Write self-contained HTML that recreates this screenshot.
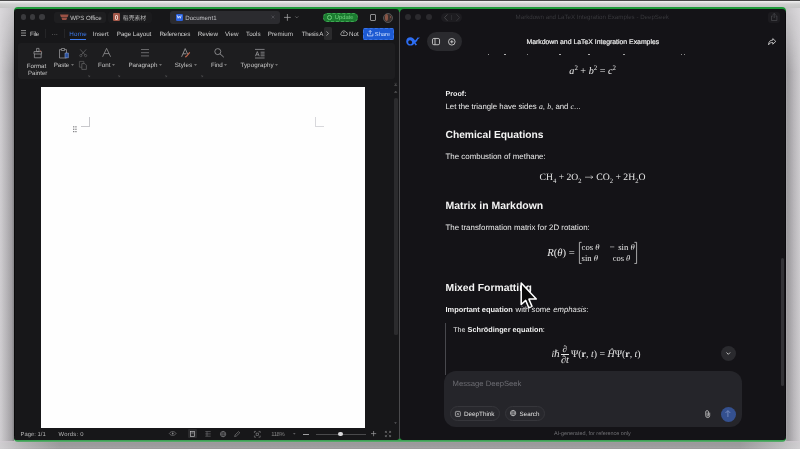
<!DOCTYPE html>
<html lang="en"><head><meta charset="utf-8"><title>WPS Office and DeepSeek</title>
<style>
html,body{margin:0;padding:0}
body{width:800px;height:449px;position:relative;overflow:hidden;background:#cfcfcf;font-family:"Liberation Sans","Noto Sans CJK SC",sans-serif}
.a{position:absolute;box-sizing:border-box}
.t{position:absolute;white-space:nowrap;letter-spacing:0;text-rendering:geometricPrecision;-webkit-font-smoothing:antialiased}
.t sup,.t sub{font-size:68%;line-height:0}
.t i.m{font-family:"Liberation Serif",serif}
svg{position:absolute;overflow:visible}
.bgL{left:0;top:0;width:14.2px;height:449px;background:linear-gradient(90deg,#d9d7da 0%,#d0ced1 50%,#c6c4c7 100%)}
.bgR{left:786px;top:0;width:14px;height:449px;background:linear-gradient(90deg,#c6c4c7 0%,#d0ced1 50%,#d9d7da 100%)}
.bgT{left:0;top:0;width:800px;height:8px;background:linear-gradient(180deg,#4a4a4a 0,#4a4a4a 1px,#f0f0f0 1.2px,#e4e4e4 2.2px,#cfcfcf 4px,#c6c6c6 8px)}
.bgB{left:0;top:441px;width:800px;height:8px;background:linear-gradient(180deg,#a898a6 0,#9a9a9b 2.2px,#9c9c9d 5px,#a4a4a5 7.2px,#8e8e8e 8px)}
.green{left:14px;top:7px;width:772px;height:435px;background:linear-gradient(180deg,#1f9a3a 0,#1f9a3a 432.6px,#3fa257 433.6px,#62ac72 435px);border-radius:4px}
.winL{left:14px;top:9px;width:385.3px;height:430.6px;background:#171719;border-radius:3px 3px 2px 2px}
.winR{left:400.2px;top:9px;width:385.8px;height:430.6px;background:#141317;border-radius:4px 4px 3px 3px}
.sep{left:399.3px;top:12px;width:0.9px;height:427px;background:#4a4a4c}
.tl{width:5.6px;height:5.6px;border-radius:50%;background:#3a3a3d}
.page{left:40.8px;top:86.8px;width:324.3px;height:341.6px;background:#fefefe}
.rib{left:17.8px;top:42.5px;width:376.8px;height:36.2px;background:#1d1d1f;border-radius:3px}
.pill{border-radius:99px}
.txt{position:absolute;left:0;top:0;width:800px;height:449px;will-change:transform}
.shL{left:0;top:0;width:14.2px;height:449px;background:linear-gradient(90deg,rgba(20,18,22,0.04) 0%,rgba(20,18,22,0.13) 45%,rgba(20,18,22,0.22) 85%,rgba(10,10,12,0.36) 100%);-webkit-mask-image:linear-gradient(180deg,transparent 12px,#000 72px);mask-image:linear-gradient(180deg,transparent 12px,#000 72px)}
.shR{left:786px;top:0;width:14px;height:449px;background:linear-gradient(270deg,rgba(20,18,22,0.05) 0%,rgba(20,18,22,0.13) 45%,rgba(20,18,22,0.24) 88%,rgba(20,18,22,0.16) 100%);-webkit-mask-image:linear-gradient(180deg,transparent 12px,#000 72px);mask-image:linear-gradient(180deg,transparent 12px,#000 72px)}
.bcL{left:0;top:441px;width:60px;height:8px;background:linear-gradient(90deg,rgba(225,223,226,0.75) 0,rgba(215,213,216,0.45) 22px,rgba(200,200,200,0) 60px)}
.bcR{left:740px;top:441px;width:60px;height:8px;background:linear-gradient(270deg,rgba(225,223,226,0.75) 0,rgba(215,213,216,0.5) 22px,rgba(200,200,200,0) 60px)}
.edgeL{left:14px;top:12px;width:0.9px;height:424px;background:#0b0b0c}
.edgeR{left:785.1px;top:13px;width:0.9px;height:423px;background:#0b0a0d}

</style></head><body>
<div class="a bgL"></div><div class="a bgR"></div><div class="a shL"></div><div class="a shR"></div><div class="a bgB"></div><div class="a bcL"></div><div class="a bcR"></div><div class="a bgT"></div>
<div class="a green"></div>
<div class="a winL"></div><div class="a winR"></div><div class="a sep"></div><div class="a edgeL"></div><div class="a edgeR"></div>

<!-- ===== left window: WPS ===== -->
<div class="a tl" style="left:20.9px;top:14.2px"></div>
<div class="a tl" style="left:29.9px;top:14.2px"></div>
<div class="a tl" style="left:39.2px;top:14.2px"></div>
<div class="a" style="left:54.3px;top:11.8px;width:52px;height:11.4px;background:#1e1e20;border-radius:3px"></div>
<div class="a" style="left:108px;top:11.8px;width:44px;height:11.4px;background:#1b1b1d;border-radius:3px"></div>
<div class="a" style="left:169.7px;top:10.8px;width:110.1px;height:13.2px;background:#2b2b2f;border-radius:3px"></div>
<!-- wps logo -->
<svg style="left:60px;top:13.8px" width="8.6" height="6.6" viewBox="0 0 8.6 6.6"><path d="M0 0.6h8.6l-0.9 2.3h-6.8zM1.3 3.5h6l-1 2.6h-4z" fill="#9c5245"/></svg>
<div class="a" style="left:113px;top:13.2px;width:7px;height:8px;background:#a5594a;border-radius:1.2px"></div>
<div class="a" style="left:115px;top:14.8px;width:2.6px;height:5px;border:0.8px solid #e8d0c8;border-radius:1px"></div>
<div class="a" style="left:176.2px;top:13.6px;width:6.7px;height:7.2px;background:#2c62dc;border-radius:1.2px"></div>
<svg style="left:177.4px;top:15.3px" width="4.4" height="3.8" viewBox="0 0 4.4 3.8"><path d="M0.2 0.3l0.9 3 1.1-2.2 1.1 2.2 0.9-3" fill="none" stroke="#dfe8ff" stroke-width="0.8"/></svg>
<svg style="left:270.9px;top:15.4px" width="4" height="4" viewBox="0 0 4 4"><path d="M0.6 0.6l2.8 2.8M3.4 0.6l-2.8 2.8" stroke="#55555a" stroke-width="0.7"/></svg>
<svg style="left:284.2px;top:13.9px" width="6.8" height="6.8" viewBox="0 0 6.8 6.8"><path d="M3.4 0v6.8M0 3.4h6.8" stroke="#b0b0b0" stroke-width="0.7"/></svg>
<svg style="left:294.6px;top:16px" width="3.6" height="2.4" viewBox="0 0 3.6 2.4"><path d="M0.3 0.4l1.5 1.5 1.5-1.5" fill="none" stroke="#8a8a8a" stroke-width="0.6"/></svg>
<div class="a pill" style="left:322.8px;top:13.2px;width:35px;height:8.7px;background:#1b7c30;border:0.6px dashed #3fa552"></div>
<div class="a" style="left:327.2px;top:15.2px;width:4.8px;height:4.8px;border-radius:50%;border:0.7px solid #6fcf7c"></div>
<div class="a" style="left:369.8px;top:14.4px;width:6.4px;height:6.3px;border:0.7px solid #8e8e90;border-radius:1px;border-top-width:1.5px"></div>
<div class="a" style="left:383.4px;top:12.8px;width:10px;height:10px;border-radius:50%;background:#3a302e;border:0.6px solid #555"></div>
<div class="a" style="left:385px;top:14.2px;width:3.4px;height:6.8px;border-radius:50%;background:#8a5646"></div>
<div class="a" style="left:390px;top:15.6px;width:1.4px;height:2.6px;border-radius:50%;background:#8a5646"></div>

<!-- menu row -->
<svg style="left:21.4px;top:30.4px" width="5" height="6" viewBox="0 0 5 6"><path d="M0 0.6h5M0 3h5M0 5.4h5" stroke="#c0c0c0" stroke-width="0.7"/></svg>
<div class="a" style="left:45.3px;top:29px;width:0.6px;height:9px;background:#252527"></div>
<div class="a" style="left:64.1px;top:29px;width:0.6px;height:9px;background:#252527"></div>
<div class="a" style="left:69.7px;top:38.6px;width:16.5px;height:0.9px;background:#3d7bf0"></div>
<div class="a" style="left:323.5px;top:26.8px;width:8.3px;height:12.8px;background:#2b2b2d;border-radius:1.5px"></div>
<svg style="left:326.4px;top:30.8px" width="3" height="5" viewBox="0 0 3 5"><path d="M0.5 0.4l2 2.1-2 2.1" fill="none" stroke="#c0c0c0" stroke-width="0.7"/></svg>
<svg style="left:340px;top:30.2px" width="7.6" height="6" viewBox="0 0 7.6 6"><path d="M2 5.5h3.8a1.6 1.6 0 0 0 .2-3.2a2.3 2.3 0 0 0-4.4.5a1.4 1.4 0 0 0 .4 2.7z" fill="none" stroke="#c8c8c8" stroke-width="0.7"/><path d="M3.8 4.2v-1.8M3 3.1l0.8-0.8 0.8 0.8" fill="none" stroke="#c8c8c8" stroke-width="0.5"/></svg>
<div class="a" style="left:362.6px;top:28px;width:31.2px;height:11.6px;background:#1d5ad2;border-radius:1.5px;border:0.6px dashed #3a74e6"></div>
<svg style="left:366.6px;top:30.4px" width="6.4" height="6.4" viewBox="0 0 6.4 6.4"><path d="M0.5 3.6v2.3h5.4v-2.3M3.2 4.2v-3.6M1.8 1.9l1.4-1.4 1.4 1.4" fill="none" stroke="#dfe8ff" stroke-width="0.7"/></svg>

<!-- ribbon -->
<div class="a rib"></div>
<!-- format painter -->
<svg style="left:32.6px;top:48.2px" width="9.6" height="10.4" viewBox="0 0 9.6 10.4"><path d="M3.6 0.4h2.4v3.2h-2.4zM1 3.6h7.6v2.4h-7.6zM1.4 6v3.8h6.8v-3.8" fill="none" stroke="#a4a4a6" stroke-width="0.7"/><circle cx="7.6" cy="3" r="0.6" fill="#c86a50"/></svg>
<!-- paste -->
<svg style="left:58.6px;top:48px" width="10" height="10.6" viewBox="0 0 10 10.6"><path d="M0.5 1.6h7v8.4h-7z" fill="none" stroke="#a4a4a6" stroke-width="0.7"/><path d="M2.4 0.5h3.2v2h-3.2z" fill="#19191b" stroke="#a4a4a6" stroke-width="0.7"/><path d="M6 5h3.4v4.8h-3.4z" fill="#27509f" stroke="#93a6cf" stroke-width="0.55"/></svg>
<svg style="left:71px;top:64.2px" width="3" height="2" viewBox="0 0 3 2"><path d="M0 0.3h3l-1.5 1.5z" fill="#8a8a8a"/></svg>
<!-- scissors -->
<svg style="left:78.6px;top:49.2px" width="8.4" height="8" viewBox="0 0 8.4 8"><path d="M1.2 0.4l5 5.6M7.2 0.4l-5 5.6" stroke="#6a6a6c" stroke-width="0.7"/><circle cx="1.8" cy="6.6" r="1.1" fill="none" stroke="#6a6a6c" stroke-width="0.6"/><circle cx="6.6" cy="6.6" r="1.1" fill="none" stroke="#6a6a6c" stroke-width="0.6"/></svg>
<!-- copy -->
<svg style="left:78.8px;top:61.4px" width="8" height="8.8" viewBox="0 0 8 8.8"><path d="M0.4 0.4h4.4v5.8h-4.4z" fill="none" stroke="#5e5e60" stroke-width="0.7"/><path d="M2.8 2.6h3l1.6 1.6v4.2h-4.6z" fill="#1f1f21" stroke="#6a6a6c" stroke-width="0.7"/></svg>
<!-- font A -->
<svg style="left:102.4px;top:48.4px" width="9.2" height="9" viewBox="0 0 9.2 9"><path d="M0.6 8.8l4-8.4 4 8.4M2.2 5.6h4.8" fill="none" stroke="#a4a4a6" stroke-width="0.68"/></svg>
<svg style="left:112px;top:64.2px" width="3" height="2" viewBox="0 0 3 2"><path d="M0 0.3h3l-1.5 1.5z" fill="#8a8a8a"/></svg>
<!-- paragraph -->
<svg style="left:141.4px;top:49.4px" width="8" height="7.4" viewBox="0 0 8 7.4"><path d="M0 0.5h8M0 3.7h8M0 6.9h8" stroke="#8c8c8e" stroke-width="0.7"/></svg>
<svg style="left:158.9px;top:64.2px" width="3" height="2" viewBox="0 0 3 2"><path d="M0 0.3h3l-1.5 1.5z" fill="#8a8a8a"/></svg>
<!-- styles -->
<svg style="left:180.8px;top:48.2px" width="9.8" height="9.6" viewBox="0 0 9.8 9.6"><path d="M0.6 8.8l3.6-8.2 2.4 5.4M2 5.8h3.4" fill="none" stroke="#a4a4a6" stroke-width="0.8"/><path d="M5.2 8.6l3.6-4.2" stroke="#c86a50" stroke-width="1.1"/><circle cx="4.8" cy="8.8" r="0.7" fill="#c86a50"/></svg>
<svg style="left:193.6px;top:64.2px" width="3" height="2" viewBox="0 0 3 2"><path d="M0 0.3h3l-1.5 1.5z" fill="#8a8a8a"/></svg>
<!-- find -->
<svg style="left:214px;top:48.4px" width="10.2" height="9.6" viewBox="0 0 10.2 9.6"><circle cx="3.8" cy="3.6" r="3" fill="none" stroke="#9c9c9e" stroke-width="0.8"/><path d="M6 5.8l3.8 3.4" stroke="#9c9c9e" stroke-width="0.9"/></svg>
<svg style="left:224.2px;top:64.2px" width="3" height="2" viewBox="0 0 3 2"><path d="M0 0.3h3l-1.5 1.5z" fill="#8a8a8a"/></svg>
<!-- typography -->
<svg style="left:254.6px;top:48.6px" width="9.6" height="9.4" viewBox="0 0 9.6 9.4"><path d="M0 0.4h9.6M0 9h9.6M5.6 3.2h4M5.6 5h4M5.6 6.8h4" stroke="#a8a8aa" stroke-width="0.7"/><path d="M0.4 7.2l1.9-4.6 1.9 4.6M1.1 5.8h2.4" fill="none" stroke="#a8a8aa" stroke-width="0.7"/></svg>
<svg style="left:275.2px;top:64.2px" width="3" height="2" viewBox="0 0 3 2"><path d="M0 0.3h3l-1.5 1.5z" fill="#8a8a8a"/></svg>
<!-- corner launchers -->
<svg style="left:87.8px;top:75.2px" width="2" height="2" viewBox="0 0 2 2"><path d="M0.2 0.2l1.4 1.4M1.7 0.4v1.3h-1.3" fill="none" stroke="#5a5a5c" stroke-width="0.5"/></svg>
<svg style="left:117.8px;top:75.2px" width="2" height="2" viewBox="0 0 2 2"><path d="M0.2 0.2l1.4 1.4M1.7 0.4v1.3h-1.3" fill="none" stroke="#5a5a5c" stroke-width="0.5"/></svg>
<svg style="left:164.6px;top:75.2px" width="2" height="2" viewBox="0 0 2 2"><path d="M0.2 0.2l1.4 1.4M1.7 0.4v1.3h-1.3" fill="none" stroke="#5a5a5c" stroke-width="0.5"/></svg>
<svg style="left:200.8px;top:75.2px" width="2" height="2" viewBox="0 0 2 2"><path d="M0.2 0.2l1.4 1.4M1.7 0.4v1.3h-1.3" fill="none" stroke="#5a5a5c" stroke-width="0.5"/></svg>

<!-- document -->
<div class="a page"></div>
<div class="a" style="left:80.8px;top:117.2px;width:9px;height:9.6px;border-right:0.6px solid #c8c8cc;border-bottom:0.6px solid #c8c8cc"></div>
<div class="a" style="left:315.4px;top:117.2px;width:9px;height:9.6px;border-left:0.6px solid #d8d8dc;border-bottom:0.6px solid #d8d8dc"></div>
<svg style="left:72.8px;top:125.8px" width="4" height="7" viewBox="0 0 4 7"><g fill="#55555a"><rect x="0.2" y="0.3" width="1.1" height="1.1"/><rect x="2.4" y="0.3" width="1.1" height="1.1"/><rect x="0.2" y="2.7" width="1.1" height="1.1"/><rect x="2.4" y="2.7" width="1.1" height="1.1"/><rect x="0.2" y="5.1" width="1.1" height="1.1"/><rect x="2.4" y="5.1" width="1.1" height="1.1"/></g></svg>
<!-- left scrollbar -->
<div class="a" style="left:393.8px;top:98px;width:3.8px;height:236.6px;background:#2b2b2d;border-radius:1.6px"></div>
<svg style="left:394.2px;top:82.6px" width="3.4" height="11" viewBox="0 0 3.4 11"><path d="M0.4 0.3h2.6M0.4 2.6l1.3-1.4 1.3 1.4zM0.4 9.6l1.3-1.6 1.3 1.6z" fill="#5a5a5c" stroke="#5a5a5c" stroke-width="0.4"/></svg>
<svg style="left:394.4px;top:422.2px" width="3" height="2.4" viewBox="0 0 3 2.4"><path d="M0.2 0.3h2.6l-1.3 1.7z" fill="#5a5a5c"/></svg>

<!-- status bar icons (left window) -->
<svg style="left:169.4px;top:431.2px" width="7.4" height="5" viewBox="0 0 7.4 5"><path d="M0.3 2.5c1.6-2.6 5.2-2.6 6.8 0c-1.6 2.6-5.2 2.6-6.8 0z" fill="none" stroke="#8a8a8c" stroke-width="0.6"/><circle cx="3.7" cy="2.5" r="0.9" fill="#8a8a8c"/></svg>
<div class="a" style="left:188px;top:429.4px;width:9.4px;height:8.8px;background:#2a2a2c;border-radius:1px"></div>
<svg style="left:190.2px;top:431px" width="5" height="5.8" viewBox="0 0 5 5.8"><rect x="0.4" y="0.4" width="4.2" height="5" fill="none" stroke="#b8b8ba" stroke-width="0.7"/><path d="M1.4 2h2.2" stroke="#b8b8ba" stroke-width="0.6"/></svg>
<svg style="left:204.6px;top:431px" width="6" height="5.8" viewBox="0 0 6 5.8"><path d="M0.3 0.6h5.4M0.3 2.9h5.4M0.3 5.2h5.4M2 0.6v4.6" stroke="#77777a" stroke-width="0.6"/></svg>
<svg style="left:219.6px;top:430.8px" width="6.2" height="6.2" viewBox="0 0 6.2 6.2"><circle cx="3.1" cy="3.1" r="2.7" fill="none" stroke="#8a8a8c" stroke-width="0.6"/><ellipse cx="3.1" cy="3.1" rx="1.2" ry="2.7" fill="none" stroke="#8a8a8c" stroke-width="0.5"/><path d="M0.4 3.1h5.4" stroke="#8a8a8c" stroke-width="0.5"/></svg>
<svg style="left:234.2px;top:430.8px" width="6.4" height="6.2" viewBox="0 0 6.4 6.2"><path d="M0.6 5.6l0.6-1.8 3.4-3.2 1.2 1.2-3.4 3.2z" fill="none" stroke="#8a8a8c" stroke-width="0.6"/></svg>
<svg style="left:254px;top:430.6px" width="6.6" height="6.6" viewBox="0 0 6.6 6.6"><path d="M0.4 2v-1.6h1.6M4.6 0.4h1.6v1.6M6.2 4.6v1.6h-1.6M2 6.2h-1.6v-1.6" fill="none" stroke="#8a8a8c" stroke-width="0.6"/><rect x="2.1" y="2.1" width="2.4" height="2.4" fill="none" stroke="#8a8a8c" stroke-width="0.6"/></svg>
<svg style="left:292.6px;top:433.2px" width="2.6" height="1.8" viewBox="0 0 2.6 1.8"><path d="M0 0.2h2.6l-1.3 1.4z" fill="#77777a"/></svg>
<div class="a" style="left:303.4px;top:433.5px;width:5.2px;height:0.7px;background:#a0a0a2"></div>
<div class="a" style="left:315.6px;top:433.6px;width:50px;height:0.6px;background:#4a4a4c"></div>
<div class="a" style="left:338.2px;top:431.5px;width:4.8px;height:4.8px;border-radius:50%;background:#d8d8da"></div>
<svg style="left:370.8px;top:431.2px" width="5.2" height="5.2" viewBox="0 0 5.2 5.2"><path d="M2.6 0v5.2M0 2.6h5.2" stroke="#a0a0a2" stroke-width="0.7"/></svg>
<svg style="left:385.2px;top:430.8px" width="6" height="6" viewBox="0 0 6 6"><path d="M0.4 2v-1.6h1.6M4 0.4h1.6v1.6M5.6 4v1.6h-1.6M2 5.6h-1.6v-1.6M0.6 0.6l1.6 1.6M5.4 0.6l-1.6 1.6M5.4 5.4l-1.6-1.6M0.6 5.4l1.6-1.6" fill="none" stroke="#8a8a8c" stroke-width="0.55"/></svg>

<!-- ===== right window: DeepSeek ===== -->
<div class="a tl" style="left:404.9px;top:14px;width:6px;height:6px;background:#2b2a2e"></div>
<div class="a tl" style="left:415.4px;top:14px;width:6px;height:6px;background:#2b2a2e"></div>
<div class="a tl" style="left:426px;top:14px;width:6px;height:6px;background:#2b2a2e"></div>
<div class="a pill" style="left:440.8px;top:12.6px;width:21.2px;height:9.6px;background:#1d1c20"></div>
<svg style="left:443.8px;top:13.8px" width="4" height="7.2" viewBox="0 0 4 7.2"><path d="M3.5 0.4l-3 3.2 3 3.2" fill="none" stroke="#4c4c50" stroke-width="0.8"/></svg>
<div class="a" style="left:451.3px;top:15px;width:0.5px;height:5px;background:#2c2c30"></div>
<svg style="left:455.6px;top:13.8px" width="4" height="7.2" viewBox="0 0 4 7.2"><path d="M0.5 0.4l3 3.2-3 3.2" fill="none" stroke="#3c3c40" stroke-width="0.8"/></svg>
<!-- titlebar share -->
<div class="a" style="left:768.4px;top:11.8px;width:11.4px;height:11.4px;border-radius:3px;background:#1c1b1f"></div>
<svg style="left:771px;top:13.2px" width="6.4" height="8" viewBox="0 0 6.4 8"><path d="M1.8 3h-1.3v4.5h5.4v-4.5h-1.3M3.2 5v-4.4M1.9 1.7l1.3-1.3 1.3 1.3" fill="none" stroke="#4c4c50" stroke-width="0.7"/></svg>
<!-- whale logo -->
<svg style="left:406.2px;top:37.3px" width="13.6" height="8.8" viewBox="0 0 13.6 8.8"><path d="M0.2 4.4c0-2.6 1.8-4.2 4.2-4.2c2.2 0 3.6 1.4 4.6 3.2c0.8-0.4 1.8-1.4 2.4-2.8c0.8 0.2 1.6 0 2.2-0.4c-0.2 1-0.8 1.6-1.6 1.8c-0.6 1.6-1.4 2.8-2.6 3.6l1.6 2.2l-1.4 0.6l-1.4-2c-0.8 1.4-2.2 2.2-3.8 2.2c-2.4 0-4.2-1.8-4.2-4.2zM2.2 5.2c0 1.2 0.8 2 1.9 2c1.2 0 2-0.8 2-1.8c0-1.2-0.9-2.2-2.1-2.2c-1 0-1.8 0.9-1.8 2z" fill="#2d6df2" fill-rule="evenodd"/></svg>
<!-- sidebar/new chat pill -->
<div class="a pill" style="left:426.6px;top:32px;width:35.4px;height:18.8px;background:#2a2a2e"></div>
<svg style="left:431.8px;top:37.8px" width="8" height="7.2" viewBox="0 0 8 7.2"><rect x="0.45" y="0.45" width="7.1" height="6.3" rx="1.4" fill="none" stroke="#e0e0e0" stroke-width="0.8"/><path d="M3 0.5v6.2" stroke="#e0e0e0" stroke-width="0.8"/></svg>
<svg style="left:448.2px;top:37.6px" width="7.6" height="7.6" viewBox="0 0 7.6 7.6"><circle cx="3.8" cy="3.8" r="3.3" fill="none" stroke="#e0e0e0" stroke-width="0.8"/><path d="M3.8 2.2v3.2M2.2 3.8h3.2" stroke="#e0e0e0" stroke-width="0.8"/></svg>
<!-- header share arrow -->
<svg style="left:767.6px;top:38px" width="8.4" height="7.4" viewBox="0 0 8.4 7.4"><path d="M4.8 0.6l3 2.8-3 2.8v-1.7c-2.2 0-3.4 0.6-4.2 2.3c0-3 1.4-4.6 4.2-4.7z" fill="none" stroke="#e0e0e0" stroke-width="0.8" stroke-linejoin="round"/></svg>
<!-- clipped text remnants under header -->
<div class="a" style="left:487.6px;top:53.8px;width:1px;height:0.7px;background:#9a9a9a"></div>
<div class="a" style="left:504.2px;top:53.8px;width:1.8px;height:0.7px;background:#b0b0b0"></div>
<div class="a" style="left:527px;top:53.8px;width:0.8px;height:0.7px;background:#8a8a8a"></div>
<div class="a" style="left:559.4px;top:53.8px;width:1.8px;height:0.7px;background:#b0b0b0"></div>
<div class="a" style="left:588.4px;top:53.8px;width:1.8px;height:0.7px;background:#b0b0b0"></div>
<div class="a" style="left:623.4px;top:53.8px;width:1.6px;height:0.7px;background:#a0a0a0"></div>
<!-- reaction arrow -->
<svg style="left:585.2px;top:174.6px" width="8.4" height="4.4" viewBox="0 0 8.4 4.4"><path d="M0 2.2h7.8M6 0.5c0.4 0.9 1.1 1.4 2 1.7c-0.9 0.3-1.6 0.8-2 1.7" fill="none" stroke="#e8e8e8" stroke-width="0.6"/></svg>
<div class="a" style="left:681.4px;top:53.9px;width:0.8px;height:0.8px;background:#8a8a8a"></div>
<div class="a" style="left:684.4px;top:53.9px;width:0.8px;height:0.8px;background:#8a8a8a"></div>
<!-- matrix brackets -->
<svg style="left:578.6px;top:242.4px" width="3" height="21.8" viewBox="0 0 3 21.8"><path d="M2.6 0.35h-2.2v21.1h2.2" fill="none" stroke="#e8e8e8" stroke-width="0.7"/></svg>
<svg style="left:634.2px;top:242.4px" width="3" height="21.8" viewBox="0 0 3 21.8"><path d="M0.4 0.35h2.2v21.1h-2.2" fill="none" stroke="#e8e8e8" stroke-width="0.7"/></svg>
<!-- blockquote -->
<div class="a" style="left:444.9px;top:323.4px;width:1.4px;height:51.4px;background:#48484d"></div>
<div class="a" style="left:560.6px;top:353.9px;width:8.8px;height:0.6px;background:#e8e8e8"></div>
<!-- scroll-down button -->
<div class="a" style="left:721px;top:346px;width:15px;height:15px;border-radius:50%;background:#2a2a2e"></div>
<svg style="left:726.2px;top:352.2px" width="4.6" height="3" viewBox="0 0 4.6 3"><path d="M0.5 0.5l1.8 1.8 1.8-1.8" fill="none" stroke="#e0e0e0" stroke-width="0.8"/></svg>
<!-- input box -->
<div class="a" style="left:443.8px;top:371.2px;width:298.4px;height:56px;border-radius:12px;background:#25252a"></div>
<div class="a pill" style="left:450px;top:406px;width:50.4px;height:15.2px;background:#28282d;border:0.6px solid #36363b"></div>
<div class="a pill" style="left:505px;top:406px;width:40px;height:15.2px;background:#28282d;border:0.6px solid #36363b"></div>
<svg style="left:455.4px;top:410.6px" width="5.8" height="5.8" viewBox="0 0 5.8 5.8"><rect x="0.4" y="0.4" width="5" height="5" rx="1" fill="none" stroke="#e0e0e0" stroke-width="0.6"/><path d="M1.6 1.6l2.6 2.6M4.2 1.6l-2.6 2.6" stroke="#e0e0e0" stroke-width="0.5"/></svg>
<svg style="left:510.4px;top:410.4px" width="6.2" height="6.2" viewBox="0 0 6.2 6.2"><circle cx="3.1" cy="3.1" r="2.7" fill="none" stroke="#e0e0e0" stroke-width="0.6"/><ellipse cx="3.1" cy="3.1" rx="1.2" ry="2.7" fill="none" stroke="#e0e0e0" stroke-width="0.5"/><path d="M0.4 3.1h5.4" stroke="#e0e0e0" stroke-width="0.5"/></svg>
<svg style="left:704.8px;top:409.6px" width="5.4" height="7.8" viewBox="0 0 5.4 7.8"><path d="M4.7 2.6v3a2 2 0 0 1-4 0v-3.6a1.4 1.4 0 0 1 2.8 0v3.4a0.7 0.7 0 0 1-1.4 0v-2.8" fill="none" stroke="#d8d8d8" stroke-width="0.7"/></svg>
<div class="a" style="left:720.7px;top:406.5px;width:15px;height:15px;border-radius:50%;background:#34508f"></div>
<svg style="left:725.3px;top:410.3px" width="5.8" height="7.4" viewBox="0 0 5.8 7.4"><path d="M2.9 7v-6.2M0.5 3l2.4-2.4 2.4 2.4" fill="none" stroke="#7f93c4" stroke-width="0.8"/></svg>
<!-- right scrollbar -->
<div class="a" style="left:780.9px;top:258.3px;width:3.6px;height:127.6px;background:#323236;border-radius:1.8px"></div>
<!-- mouse cursor -->
<svg style="left:519px;top:280.6px;z-index:5" width="19" height="28" viewBox="0 0 19 28"><path d="M2.2 2.1v21.4l4.5-4.1 3.1 7.4 3.2-1.4-3.1-7.3h7.4z" fill="#0a0a0a" stroke="#ffffff" stroke-width="1.5" stroke-linejoin="round"/></svg>

<div class="txt">
<span class="t" id="t0" style="left:70.30px;top:14.68px;font:400 6.123px/7.348px 'Liberation Sans','Noto Sans CJK SC',sans-serif;color:#c8c8c8;letter-spacing:-0.004px;">WPS Office</span>
<span class="t" id="t1" style="left:122.80px;top:15.59px;font:400 5.850px/7.020px 'Liberation Sans','Noto Sans CJK SC',sans-serif;color:#b8b8b8;">稻壳素材</span>
<span class="t" id="t2" style="left:185.25px;top:14.68px;font:400 6.123px/7.348px 'Liberation Sans','Noto Sans CJK SC',sans-serif;color:#c0c0c4;letter-spacing:0.004px;">Document1</span>
<span class="t" id="t3" style="left:334.75px;top:14.51px;font:400 5.814px/6.977px 'Liberation Sans','Noto Sans CJK SC',sans-serif;color:#74d482;">Update</span>
<span class="t" id="t4" style="left:30.00px;top:30.55px;font:400 6.250px/7.500px 'Liberation Sans','Noto Sans CJK SC',sans-serif;color:#c8c8c8;letter-spacing:-0.259px;">File</span>
<span class="t" id="t5" style="left:51.50px;top:30.50px;font:400 6.500px/7.800px 'Liberation Sans','Noto Sans CJK SC',sans-serif;color:#b0b0b0;">···</span>
<span class="t" id="t6" style="left:69.30px;top:30.55px;font:400 6.250px/7.500px 'Liberation Sans','Noto Sans CJK SC',sans-serif;color:#3d7bf0;letter-spacing:0.273px;">Home</span>
<span class="t" id="t7" style="left:92.80px;top:30.55px;font:400 6.250px/7.500px 'Liberation Sans','Noto Sans CJK SC',sans-serif;color:#d0d0d0;letter-spacing:0.053px;">Insert</span>
<span class="t" id="t8" style="left:116.80px;top:30.55px;font:400 6.250px/7.500px 'Liberation Sans','Noto Sans CJK SC',sans-serif;color:#d0d0d0;letter-spacing:-0.061px;">Page Layout</span>
<span class="t" id="t9" style="left:159.40px;top:30.55px;font:400 6.250px/7.500px 'Liberation Sans','Noto Sans CJK SC',sans-serif;color:#d0d0d0;letter-spacing:-0.118px;">References</span>
<span class="t" id="t10" style="left:197.80px;top:30.55px;font:400 6.250px/7.500px 'Liberation Sans','Noto Sans CJK SC',sans-serif;color:#d0d0d0;letter-spacing:-0.080px;">Review</span>
<span class="t" id="t11" style="left:225.00px;top:30.55px;font:400 6.250px/7.500px 'Liberation Sans','Noto Sans CJK SC',sans-serif;color:#d0d0d0;letter-spacing:0.021px;">View</span>
<span class="t" id="t12" style="left:246.00px;top:30.55px;font:400 6.250px/7.500px 'Liberation Sans','Noto Sans CJK SC',sans-serif;color:#d0d0d0;letter-spacing:0.000px;">Tools</span>
<span class="t" id="t13" style="left:267.75px;top:30.55px;font:400 6.250px/7.500px 'Liberation Sans','Noto Sans CJK SC',sans-serif;color:#d0d0d0;letter-spacing:0.040px;">Premium</span>
<span class="t" id="t14" style="left:301.75px;top:30.55px;font:400 6.250px/7.500px 'Liberation Sans','Noto Sans CJK SC',sans-serif;color:#d0d0d0;letter-spacing:-0.318px;">Thesis A</span>
<span class="t" id="t15" style="left:349.00px;top:30.55px;font:400 6.250px/7.500px 'Liberation Sans','Noto Sans CJK SC',sans-serif;color:#d0d0d0;letter-spacing:0.012px;">Not</span>
<span class="t" id="t16" style="left:374.80px;top:31.53px;font:400 5.789px/6.947px 'Liberation Sans','Noto Sans CJK SC',sans-serif;color:#cfe0ff;">Share</span>
<span class="t" id="t17" style="left:26.75px;top:62.67px;font:400 6.140px/7.368px 'Liberation Sans','Noto Sans CJK SC',sans-serif;color:#c4c4c4;letter-spacing:0.011px;">Format</span>
<span class="t" id="t18" style="left:28.00px;top:69.62px;font:400 6.140px/7.368px 'Liberation Sans','Noto Sans CJK SC',sans-serif;color:#c4c4c4;letter-spacing:-0.009px;">Painter</span>
<span class="t" id="t19" style="left:53.75px;top:61.74px;font:400 6.263px/7.516px 'Liberation Sans','Noto Sans CJK SC',sans-serif;color:#c4c4c4;letter-spacing:-0.117px;">Paste</span>
<span class="t" id="t20" style="left:98.00px;top:61.74px;font:400 6.263px/7.516px 'Liberation Sans','Noto Sans CJK SC',sans-serif;color:#c4c4c4;letter-spacing:0.021px;">Font</span>
<span class="t" id="t21" style="left:128.40px;top:61.74px;font:400 6.263px/7.516px 'Liberation Sans','Noto Sans CJK SC',sans-serif;color:#c4c4c4;letter-spacing:-0.019px;">Paragraph</span>
<span class="t" id="t22" style="left:174.75px;top:61.74px;font:400 6.263px/7.516px 'Liberation Sans','Noto Sans CJK SC',sans-serif;color:#c4c4c4;letter-spacing:0.079px;">Styles</span>
<span class="t" id="t23" style="left:211.00px;top:61.74px;font:400 6.263px/7.516px 'Liberation Sans','Noto Sans CJK SC',sans-serif;color:#c4c4c4;letter-spacing:-0.144px;">Find</span>
<span class="t" id="t24" style="left:240.40px;top:61.74px;font:400 6.263px/7.516px 'Liberation Sans','Noto Sans CJK SC',sans-serif;color:#c4c4c4;letter-spacing:0.068px;">Typography</span>
<span class="t" id="t25" style="left:20.60px;top:431.63px;font:400 5.874px/7.049px 'Liberation Sans','Noto Sans CJK SC',sans-serif;color:#b8b8b8;letter-spacing:0.000px;">Page: 1/1</span>
<span class="t" id="t26" style="left:58.50px;top:431.63px;font:400 5.874px/7.049px 'Liberation Sans','Noto Sans CJK SC',sans-serif;color:#b8b8b8;letter-spacing:0.228px;">Words: 0</span>
<span class="t" id="t27" style="left:271.20px;top:431.63px;font:400 5.874px/7.049px 'Liberation Sans','Noto Sans CJK SC',sans-serif;color:#8a8a8a;letter-spacing:-0.331px;">118%</span>
<span class="t" id="t28" style="left:515.60px;top:13.55px;font:400 6.172px/7.406px 'Liberation Sans','Noto Sans CJK SC',sans-serif;color:#38383c;">Markdown and LaTeX Integration Examples - DeepSeek</span>
<span class="t" id="t29" style="left:526.50px;top:38.72px;font:400 6.875px/8.250px 'Liberation Sans','Noto Sans CJK SC',sans-serif;color:#f0f0f0;-webkit-text-stroke:0.18px #f0f0f0;">Markdown and LaTeX Integration Examples</span>
<span class="t" id="t30" style="left:445.50px;top:89.68px;font:700 7.198px/8.637px 'Liberation Sans','Noto Sans CJK SC',sans-serif;color:#f0f0f0;">Proof:</span>
<span class="t" id="t31" style="left:445.50px;top:101.66px;font:400 7.824px/9.389px 'Liberation Sans','Noto Sans CJK SC',sans-serif;color:#e8e8e8;">Let the triangle have sides <i class="m">a</i>, <i class="m">b</i>, and <i class="m">c</i>...</span>
<span class="t" id="t32" style="left:445.50px;top:129.60px;font:700 10.253px/12.304px 'Liberation Sans','Noto Sans CJK SC',sans-serif;color:#f4f4f4;">Chemical Equations</span>
<span class="t" id="t33" style="left:445.50px;top:151.74px;font:400 7.929px/9.515px 'Liberation Sans','Noto Sans CJK SC',sans-serif;color:#e8e8e8;">The combustion of methane:</span>
<span class="t" id="t34" style="left:445.50px;top:200.56px;font:700 10.486px/12.584px 'Liberation Sans','Noto Sans CJK SC',sans-serif;color:#f4f4f4;">Matrix in Markdown</span>
<span class="t" id="t35" style="left:445.50px;top:222.56px;font:400 7.902px/9.483px 'Liberation Sans','Noto Sans CJK SC',sans-serif;color:#e8e8e8;">The transformation matrix for 2D rotation:</span>
<span class="t" id="t36" style="left:445.50px;top:282.52px;font:700 10.379px/12.454px 'Liberation Sans','Noto Sans CJK SC',sans-serif;color:#f4f4f4;">Mixed Formatting</span>
<span class="t" id="t37" style="left:445.50px;top:305.58px;font:700 7.453px/8.944px 'Liberation Sans','Noto Sans CJK SC',sans-serif;color:#f0f0f0;">Important equation</span>
<span class="t" id="t38" style="left:515.60px;top:304.63px;font:400 7.775px/9.330px 'Liberation Sans','Noto Sans CJK SC',sans-serif;color:#e8e8e8;">with some</span>
<span class="t" id="t39" style="left:553.30px;top:304.67px;font:400 7.720px/9.264px 'Liberation Sans','Noto Sans CJK SC',sans-serif;color:#e8e8e8;"><i>emphasis</i>:</span>
<span class="t" id="t40" style="left:453.20px;top:326.70px;font:400 7.079px/8.495px 'Liberation Sans','Noto Sans CJK SC',sans-serif;color:#e8e8e8;">The</span>
<span class="t" id="t41" style="left:467.60px;top:325.57px;font:700 7.293px/8.752px 'Liberation Sans','Noto Sans CJK SC',sans-serif;color:#f0f0f0;">Schrödinger equation<span style="font-weight:400">:</span></span>
<span class="t" id="t42" style="left:452.50px;top:378.65px;font:400 7.661px/9.194px 'Liberation Sans','Noto Sans CJK SC',sans-serif;color:#6c6c72;">Message DeepSeek</span>
<span class="t" id="t43" style="left:464.00px;top:410.65px;font:400 6.328px/7.593px 'Liberation Sans','Noto Sans CJK SC',sans-serif;color:#e0e0e0;">DeepThink</span>
<span class="t" id="t44" style="left:519.60px;top:410.65px;font:400 6.249px/7.498px 'Liberation Sans','Noto Sans CJK SC',sans-serif;color:#e0e0e0;">Search</span>
<span class="t" id="t45" style="left:554.00px;top:430.58px;font:400 5.453px/6.544px 'Liberation Sans','Noto Sans CJK SC',sans-serif;color:#707074;">AI-generated, for reference only</span>
<span class="t" id="t46" style="left:569.30px;top:65.50px;font:400 10.163px/12.195px 'Liberation Serif','DejaVu Serif',serif;color:#e8e8e8;"><i>a</i><sup>2</sup> + <i>b</i><sup>2</sup> = <i>c</i><sup>2</sup></span>
<span class="t" id="t47" style="left:539.60px;top:171.72px;font:400 9.634px/11.561px 'Liberation Serif','DejaVu Serif',serif;color:#e8e8e8;">CH<sub>4</sub> + 2O<sub>2</sub></span>
<span class="t" id="t48" style="left:596.20px;top:171.66px;font:400 9.739px/11.686px 'Liberation Serif','DejaVu Serif',serif;color:#e8e8e8;">CO<sub>2</sub> + 2H<sub>2</sub>O</span>
<span class="t" id="t49" style="left:547.30px;top:247.62px;font:400 10.634px/12.761px 'Liberation Serif','DejaVu Serif',serif;color:#e8e8e8;"><i>R</i>(<i>θ</i>) =</span>
<span class="t" id="t50" style="left:581.60px;top:241.58px;font:400 8.620px/10.344px 'Liberation Serif','DejaVu Serif',serif;color:#e8e8e8;">cos <i>θ</i></span>
<span class="t" id="t51" style="left:609.40px;top:241.72px;font:400 9.219px/11.063px 'Liberation Serif','DejaVu Serif',serif;color:#e8e8e8;">−</span>
<span class="t" id="t52" style="left:618.20px;top:241.57px;font:400 8.642px/10.370px 'Liberation Serif','DejaVu Serif',serif;color:#e8e8e8;">sin <i>θ</i></span>
<span class="t" id="t53" style="left:581.60px;top:252.65px;font:400 8.589px/10.307px 'Liberation Serif','DejaVu Serif',serif;color:#e8e8e8;">sin <i>θ</i></span>
<span class="t" id="t54" style="left:612.70px;top:252.71px;font:400 8.476px/10.171px 'Liberation Serif','DejaVu Serif',serif;color:#e8e8e8;">cos <i>θ</i></span>
<span class="t" id="t55" style="left:551.40px;top:349.59px;font:400 9.437px/11.325px 'Liberation Serif','DejaVu Serif',serif;color:#e8e8e8;"><i>iℏ</i></span>
<span class="t" id="t56" style="left:562.50px;top:343.65px;font:400 9.085px/10.902px 'Liberation Serif','DejaVu Serif',serif;color:#e8e8e8;"><i>∂</i></span>
<span class="t" id="t57" style="left:561.00px;top:354.64px;font:400 10.343px/12.412px 'Liberation Serif','DejaVu Serif',serif;color:#e8e8e8;"><i>∂t</i></span>
<span class="t" id="t58" style="left:571.00px;top:348.56px;font:400 9.905px/11.886px 'Liberation Serif','DejaVu Serif',serif;color:#e8e8e8;">Ψ(<b>r</b>, <i>t</i>) = <i>Ĥ</i>Ψ(<b>r</b>, <i>t</i>)</span>
</div>
</body></html>
